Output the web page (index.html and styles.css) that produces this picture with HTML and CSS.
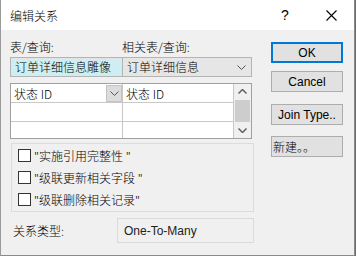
FILE: index.html
```html
<!DOCTYPE html>
<html>
<head>
<meta charset="utf-8">
<link rel="stylesheet" href="styles.css">
</head>
<body>
<div class="window">
  <div class="titlebar">
    <span class="title">编辑关系</span>
    <span class="help">?</span>
    <span class="close"><svg width="11" height="11" viewBox="0 0 11 11"><path d="M0.5 0.5 L10.5 10.5 M10.5 0.5 L0.5 10.5" stroke="#000" stroke-width="1.1" fill="none"/></svg></span>
  </div>
  <div class="body">
    <div class="left">
      <div class="labels">
        <span class="lab lab1">表/查询:</span>
        <span class="lab">相关表/查询:</span>
      </div>
      <div class="combos">
        <div class="combo combo1"><span class="sel">订单详细信息雕像</span></div>
        <div class="combo combo2"><span>订单详细信息</span>
          <svg class="chev" width="9" height="5" viewBox="0 0 9 5"><path d="M0.5 0.5 L4.5 4.5 L8.5 0.5" stroke="#555" fill="none"/></svg>
        </div>
      </div>
      <div class="grid">
        <div class="cols">
          <div class="row">
            <div class="cell c1"><span>状态 ID</span><span class="dd"><svg width="9" height="5" viewBox="0 0 9 5"><path d="M0.5 0.5 L4.5 4.5 L8.5 0.5" stroke="#555" fill="none"/></svg></span></div>
            <div class="cell c2">状态 ID</div>
          </div>
          <div class="row"><div class="cell c1"></div><div class="cell c2"></div></div>
          <div class="row last"><div class="cell c1"></div><div class="cell c2"></div></div>
        </div>
        <div class="scroll">
          <svg class="arr" width="9" height="5" viewBox="0 0 9 5"><path d="M0.5 4.5 L4.5 0.5 L8.5 4.5" stroke="#606060" stroke-width="1.5" fill="none"/></svg>
          <div class="thumb"></div>
          <svg class="arr" width="9" height="5" viewBox="0 0 9 5"><path d="M0.5 0.5 L4.5 4.5 L8.5 0.5" stroke="#606060" stroke-width="1.5" fill="none"/></svg>
        </div>
      </div>
      <div class="group">
        <label class="chk"><span class="box"></span><span>"实施引用完整性 "</span></label>
        <label class="chk"><span class="box"></span><span>"级联更新相关字段 "</span></label>
        <label class="chk"><span class="box"></span><span>"级联删除相关记录"</span></label>
      </div>
      <div class="reltype">
        <span class="rlab">关系类型:</span>
        <div class="rbox">One-To-Many</div>
      </div>
    </div>
    <div class="right">
      <div class="btn ok">OK</div>
      <div class="btn">Cancel</div>
      <div class="btn join">Join Type..</div>
      <div class="btn new">新建。。</div>
    </div>
  </div>
</div>
</body>
</html>
```

FILE: styles.css
```css
html, body {
  margin: 0;
  padding: 0;
  background: #6d6d6d;
}
body {
  width: 356px;
  height: 256px;
  overflow: hidden;
  font-family: "Noto Sans CJK SC", sans-serif;
  font-weight: 300;
  font-size: 12px;
  color: #000;
}
.window {
  width: 353px;
  height: 255px;
  background: #f0f0f0;
  border-left: 1px solid #9a9a9a;
  border-right: 1px solid #8a8a8a;
  border-bottom: 1px solid #8a8a8a;
  display: flex;
  flex-direction: column;
}
.titlebar {
  height: 30px;
  background: #fff;
  display: flex;
  align-items: center;
  padding-left: 9px;
  flex-shrink: 0;
}
.title {
  font-size: 12px;
  flex: 1;
}
.help {
  font-family: "Liberation Sans", sans-serif;
  font-weight: 400;
  font-size: 14px;
  width: 14px;
  margin-right: 31px;
}
.close {
  display: flex;
  margin-right: 17px;
}
.body {
  display: flex;
  flex: 1;
}
.left {
  width: 244px;
  margin-left: 9px;
  display: flex;
  flex-direction: column;
}
.labels {
  display: flex;
  margin-top: 9px;
  height: 16px;
  line-height: 16px;
}
.lab1 {
  width: 112px;
}
.combos {
  display: flex;
  margin-top: 2px;
  width: 242px;
  height: 20px;
}
.combo {
  box-sizing: border-box;
  height: 20px;
  border: 1px solid #b4b4b4;
  display: flex;
  align-items: center;
  line-height: 16px;
}
.combo1 {
  width: 113px;
  padding: 1px;
  background: #e4e4e4;
}
.combo1 .sel {
  background: #cdeef2;
  flex: 1;
  height: 16px;
  padding-left: 3px;
}
.combo2 {
  flex: 1;
  border-left: none;
  background: #e6e6e6;
  padding-left: 4px;
  justify-content: space-between;
}
.chev {
  margin-right: 5px;
}
.grid {
  margin-top: 6px;
  width: 242px;
  height: 56px;
  box-sizing: border-box;
  border: 1px solid #a0a0a0;
  background: #fff;
  display: flex;
}
.cols {
  flex: 1;
  display: flex;
  flex-direction: column;
}
.row {
  display: flex;
  height: 19px;
  border-bottom: 1px solid #c8c8c8;
  box-sizing: border-box;
}
.row.last {
  border-bottom: none;
  flex: 1;
}
.cell {
  display: flex;
  align-items: center;
  box-sizing: border-box;
}
.c1 {
  width: 112px;
  border-right: 1px solid #c8c8c8;
  padding-left: 3px;
  justify-content: space-between;
}
.c2 {
  flex: 1;
  padding-left: 3px;
}
.dd {
  width: 16px;
  height: 17px;
  background: #dcdcdc;
  border: 1px solid #c4c4c4;
  box-sizing: border-box;
  display: flex;
  align-items: center;
  justify-content: center;
}
.scroll {
  width: 17px;
  border-left: 1px solid #c8c8c8;
  background: #f0f0f0;
  display: flex;
  flex-direction: column;
  align-items: center;
}
.arr {
  margin: 5px 0;
}
.thumb {
  width: 15px;
  height: 17px;
  background: #cdcdcd;
  flex: 1;
  margin: 1px 0;
}
.group {
  margin-top: 4px;
  margin-left: 1px;
  height: 69px;
  box-sizing: border-box;
  border: 1px solid #dcdcdc;
  padding-left: 6px;
  display: flex;
  flex-direction: column;
}
.chk {
  display: flex;
  align-items: center;
  height: 22px;
}
.box {
  width: 13px;
  height: 13px;
  box-sizing: border-box;
  border: 1px solid #333;
  background: #fff;
  margin-right: 3px;
}
.reltype {
  display: flex;
  align-items: center;
  margin-top: 6px;
  height: 25px;
}
.rlab {
  width: 106px;
  padding-left: 3px;
}
.rbox {
  flex: 1;
  margin-left: -2px;
  height: 25px;
  box-sizing: border-box;
  border: 1px solid #dadada;
  padding-left: 6px;
  display: flex;
  align-items: center;
  color: #222;
  font-family: "Liberation Sans", sans-serif;
  font-weight: 400;
}
.right {
  margin-left: 17px;
  display: flex;
  flex-direction: column;
  margin-top: 12px;
}
.btn {
  width: 72px;
  height: 21px;
  box-sizing: border-box;
  border: 1px solid #adadad;
  background: #e1e1e1;
  display: flex;
  align-items: center;
  justify-content: center;
  margin-bottom: 9px;
  font-family: "Liberation Sans", "Noto Sans CJK SC", sans-serif;
  font-weight: 400;
}
.btn.ok {
  border: 2px solid #0078d7;
  margin-bottom: 8px;
}
.btn.join {
  margin-top: 3px;
  margin-bottom: 11px;
}
.btn.new {
  justify-content: flex-start;
  padding-left: 1px;
  font-family: "Noto Sans CJK SC", sans-serif;
  font-weight: 300;
}
```
